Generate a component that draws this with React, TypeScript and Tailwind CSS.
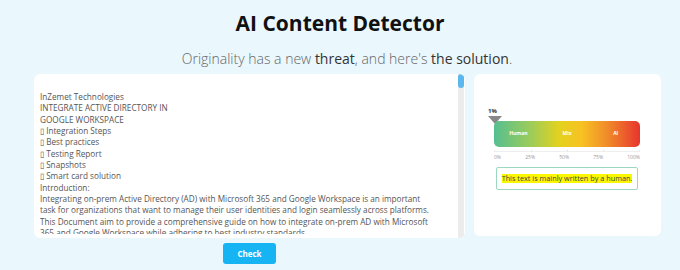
import React from "react";

const lines = [
  "",
  "InZemet Technologies",
  "INTEGRATE ACTIVE DIRECTORY IN",
  "GOOGLE WORKSPACE",
  "\u25AF Integration Steps",
  "\u25AF Best practices",
  "\u25AF Testing Report",
  "\u25AF Snapshots",
  "\u25AF Smart card solution",
  "Introduction:",
  "Integrating on-prem Active Directory (AD) with Microsoft 365 and Google Workspace is an important",
  "task for organizations that want to manage their user identities and login seamlessly across platforms.",
  "This Document aim to provide a comprehensive guide on how to integrate on-prem AD with Microsoft",
  "365 and Google Workspace while adhering to best industry standards.",
];

const ticks = ["0%", "25%", "50%", "75%", "100%"];

export default function App() {
  return (
    <div className="w-[680px] h-[270px] bg-[#eaf7fd] overflow-hidden font-['Open_Sans',sans-serif]">
      <h1 className="pt-[8px] text-center text-[21px] leading-[30px] font-bold text-[#111]">
        AI Content Detector
      </h1>
      <p className="mt-[12px] pl-[14px] text-center text-[14px] leading-[18px] text-[#666] font-light">
        Originality has a new <span className="text-[#333] font-normal">threat</span>, and here's{" "}
        <span className="text-[#333] font-normal">the solution</span>.
      </p>

      <div className="mt-[6px] flex gap-[9px] pl-[34px]">
        {/* text input + button */}
        <div className="flex flex-col items-center w-[431px]">
          <div className="relative w-full h-[164px] bg-white rounded-[6px] overflow-hidden">
            <div className="h-[160px] overflow-hidden pl-[6px] pt-[5.5px] text-[8.2px] leading-[11.35px] text-[#555] whitespace-pre">
              {lines.map((l, i) => (
                <div key={i} className="h-[11.35px]">
                  {l}
                </div>
              ))}
            </div>
            <div className="absolute right-[1px] top-0 w-[6px] h-full bg-[#ececec]">
              <div className="h-[14px] rounded-[3px] bg-[#5bb8ee]" />
            </div>
          </div>
          <button className="mt-[5px] w-[53px] h-[21px] rounded-[3px] bg-[#17b4f3] text-white text-[8px] font-bold">
            Check
          </button>
        </div>

        {/* result */}
        <div className="w-[187px] h-[162px] bg-white rounded-[6px] pl-[14px] pt-[34px]">
          <div className="text-[6px] leading-[7px] font-bold text-[#333]">1%</div>
          <div className="mt-[1px] w-0 h-0 border-l-[7px] border-r-[7px] border-t-[8px] border-l-transparent border-r-transparent border-t-[#888]" />
          <div className="mt-[-3px] ml-[6px] w-[146px]">
            <div className="h-[26px] rounded-[5px] bg-[linear-gradient(90deg,#55bf90_0%,#9ccc5a_25%,#e4d21e_45%,#f7c223_60%,#f08a2a_78%,#e8342d_100%)] flex items-center justify-around text-[5px] font-bold text-white">
              <span className="flex-1 text-center">Human</span>
              <span className="flex-1 text-center">Mix</span>
              <span className="flex-1 text-center">AI</span>
            </div>
            <div className="mt-[3px] h-[2px] border-x border-b border-[#eee] relative">
              <div className="absolute left-1/4 top-0 h-full border-l border-[#ddd]" />
              <div className="absolute left-1/2 top-0 h-full border-l border-[#ddd]" />
              <div className="absolute left-3/4 top-0 h-full border-l border-[#ddd]" />
            </div>
            <div className="mt-[2px] flex justify-between text-[5px] leading-[6px] text-[#999]">
              {ticks.map((t) => (
                <span key={t}>{t}</span>
              ))}
            </div>
          </div>
          <div className="mt-[7px] ml-[8px] w-[142px] h-[23px] border border-[#9cd8bf] rounded-[2px] flex items-center justify-center">
            <span className="bg-[#fbf700] text-[7.3px] leading-[9px] text-[#444]">
              This text is mainly written by a human.
            </span>
          </div>
        </div>
      </div>
    </div>
  );
}
